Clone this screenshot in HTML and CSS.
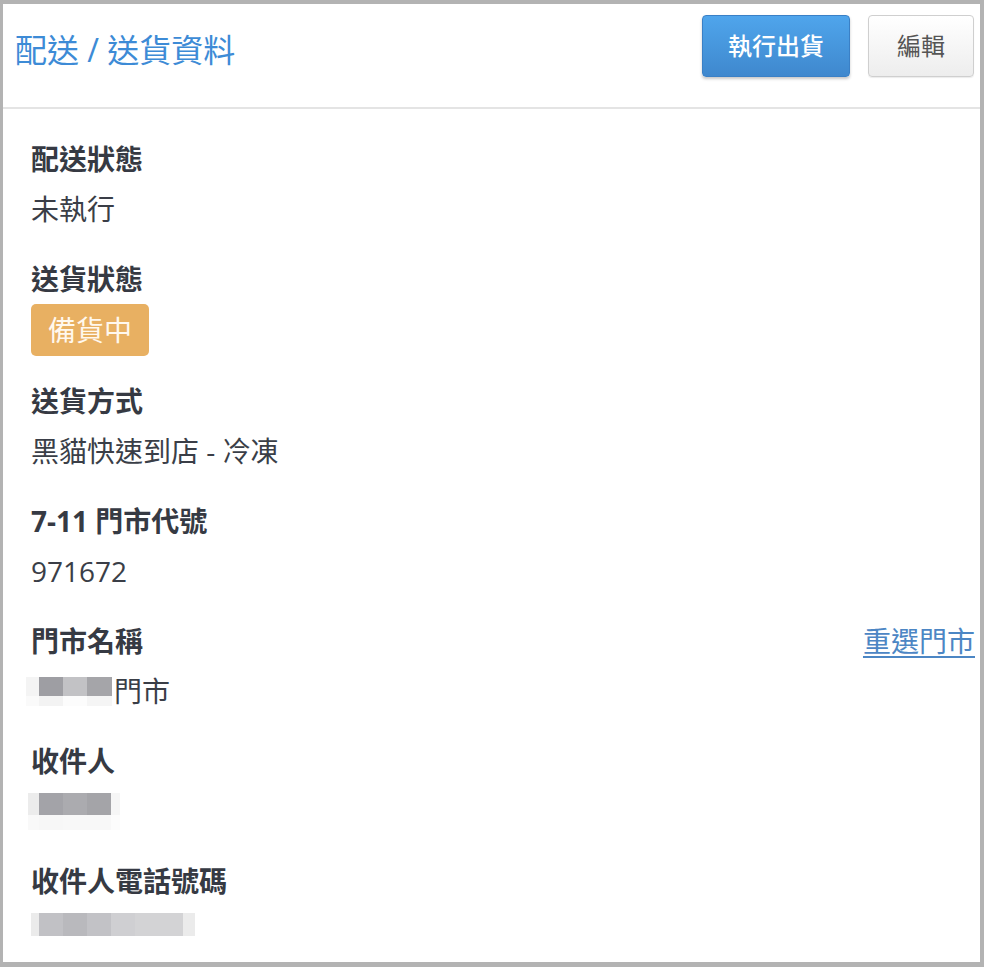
FILE: index.html
```html
<!DOCTYPE html>
<html lang="zh-Hant">

<head>
    <meta charset="UTF-8">
    <meta name="viewport" content="width=device-width, initial-scale=1.0">
    <title>配送 / 送貨資料</title>
    <link rel="stylesheet" href="styles.css">
</head>

<body>
    <div id="panel">
        <div id="panel-head">
            <h2 class="panel-title">配送 / 送貨資料</h2>
            <button class="btn btn-primary">執行出貨</button>
            <button class="btn btn-default">編輯</button>
        </div>
        <div id="panel-body">
            <div class="field">
                <div class="field-label">配送狀態</div>
                <div class="field-value">未執行</div>
            </div>
            <div class="field">
                <div class="field-label">送貨狀態</div>
                <div class="field-value"><span class="badge">備貨中</span></div>
            </div>
            <div class="field">
                <div class="field-label">送貨方式</div>
                <div class="field-value">黑貓快速到店 - 冷凍</div>
            </div>
            <div class="field">
                <div class="field-label">7-11 門市代號</div>
                <div class="field-value">971672</div>
            </div>
            <div class="field">
                <div class="field-label">門市名稱 <a href="#" class="reselect">重選門市</a></div>
                <div class="field-value">
                    <span class="pix pix-store">
                        <i class="c1"></i><i class="c2"></i><i class="c3"></i><i class="c4"></i>
                        <i class="c5"></i><i class="c6"></i><i class="c7"></i><i class="c8"></i>
                    </span>門市
                </div>
            </div>
            <div class="field">
                <div class="field-label">收件人</div>
                <div class="field-value">
                    <span class="pix pix-name">
                        <i class="c1"></i><i class="c2"></i><i class="c3"></i><i class="c4"></i><i class="c5"></i>
                        <i class="c6"></i><i class="c7"></i><i class="c8"></i><i class="c9"></i><i class="c10"></i>
                    </span>
                </div>
            </div>
            <div class="field">
                <div class="field-label">收件人電話號碼</div>
                <div class="field-value">
                    <span class="pix pix-phone">
                        <i class="c1"></i><i class="c2"></i><i class="c3"></i><i class="c4"></i>
                        <i class="c5"></i><i class="c6"></i><i class="c7"></i><i class="c8"></i>
                    </span>
                </div>
            </div>
        </div>
    </div>
</body>

</html>
```

FILE: styles.css
```css
    body {
        margin: 0;
        padding: 4px 4px 5px 3px;
        background-color: #b3b3b3;
        font: 28px/50px "Open Sans", "Noto Sans CJK TC", sans-serif;
        color: #3a3e47;
    }

    #panel {
        height: 958px;
        background-color: #fff;
        overflow: hidden;
    }

    #panel-head {
        display: flex;
        align-items: flex-start;
        height: 105px;
        box-sizing: border-box;
        padding: 11px 6px 0 12px;
        border-bottom: 2px solid #e4e4e4;
    }

    .panel-title {
        margin: 0 auto 0 0;
        padding-top: 4px;
        font-size: 32px;
        line-height: 62px;
        font-weight: 400;
        color: #3d8bd6;
    }

    .btn {
        height: 62px;
        margin-left: 18px;
        border-radius: 4px;
        font: 500 24px/60px "Open Sans", "Noto Sans CJK TC", sans-serif;
        cursor: pointer;
    }
    .btn-primary {
        margin-left: 0;
        padding: 0 25px;
        color: #fff;
        border: 1px solid #3a80c6;
        background: linear-gradient(#4fa5ec, #3f88ce);
        box-shadow: 0 2px 3px rgba(0,0,0,0.22);
    }
    .btn-default {
        padding: 0 28px;
        font-weight: 400;
        color: #555;
        border: 1px solid #cfcfcf;
        background: linear-gradient(#fff, #ededed);
        box-shadow: 0 1px 1px rgba(0,0,0,0.08);
    }

    #panel-body {
        padding: 25px 5px 0 28px;
    }

    .field {
        margin-bottom: 20px;
    }
    .field-label {
        display: flex;
        justify-content: space-between;
        font-weight: 700;
        color: #363a43;
    }
    .field-value {
        display: flex;
        align-items: center;
        min-height: 50px;
    }

    .reselect {
        font-weight: 400;
        color: #4c86c4;
        text-decoration: underline;
        text-underline-offset: 4px;
        text-decoration-thickness: 2px;
    }

    .badge {
        display: inline-block;
        height: 52px;
        line-height: 52px;
        padding: 0 17px;
        border-radius: 5px;
        background-color: #e8b062;
        color: #fff8ee;
    }

    /* mosaic blocks for masked data */
    .pix {
        display: inline-grid;
        flex-shrink: 0;
    }
    .pix-store {
        margin-left: -5px;
        margin-right: 2px;
        grid-template-columns: 13px 24px 24px 25px;
        grid-template-rows: 19px 10px;
    }
    .pix-store .c1 { background: #f4f4f4; }
    .pix-store .c2 { background: #9e9ea3; }
    .pix-store .c3 { background: #c2c2c5; }
    .pix-store .c4 { background: #a5a5a9; }
    .pix-store .c5 { background: #fafafa; }
    .pix-store .c6 { background: #f3f3f3; }
    .pix-store .c7 { background: #fcfcfc; }
    .pix-store .c8 { background: #f5f5f5; }

    .pix-name {
        margin-left: -3px;
        grid-template-columns: 11px 24px 24px 24px 9px;
        grid-template-rows: 22px 15px;
    }
    .pix-name .c1 { background: #ececec; }
    .pix-name .c2 { background: #a3a3a8; }
    .pix-name .c3 { background: #ababaf; }
    .pix-name .c4 { background: #a4a4a8; }
    .pix-name .c5 { background: #f6f6f6; }
    .pix-name .c6 { background: #f9f9f9; }
    .pix-name .c7 { background: #f7f7f7; }
    .pix-name .c8 { background: #f8f8f8; }
    .pix-name .c9 { background: #f8f8f8; }
    .pix-name .c10 { background: #fcfcfc; }

    .pix-phone {
        margin-bottom: 13px;
        grid-template-columns: 8px 24px 24px 24px 24px 24px 24px 12px;
        grid-template-rows: 23px;
    }
    .pix-phone .c1 { background: #ebebeb; }
    .pix-phone .c2 { background: #c1c1c5; }
    .pix-phone .c3 { background: #b9b9bd; }
    .pix-phone .c4 { background: #c2c2c6; }
    .pix-phone .c5 { background: #cfcfd2; }
    .pix-phone .c6 { background: #d3d3d5; }
    .pix-phone .c7 { background: #d3d3d5; }
    .pix-phone .c8 { background: #ebebeb; }
```
